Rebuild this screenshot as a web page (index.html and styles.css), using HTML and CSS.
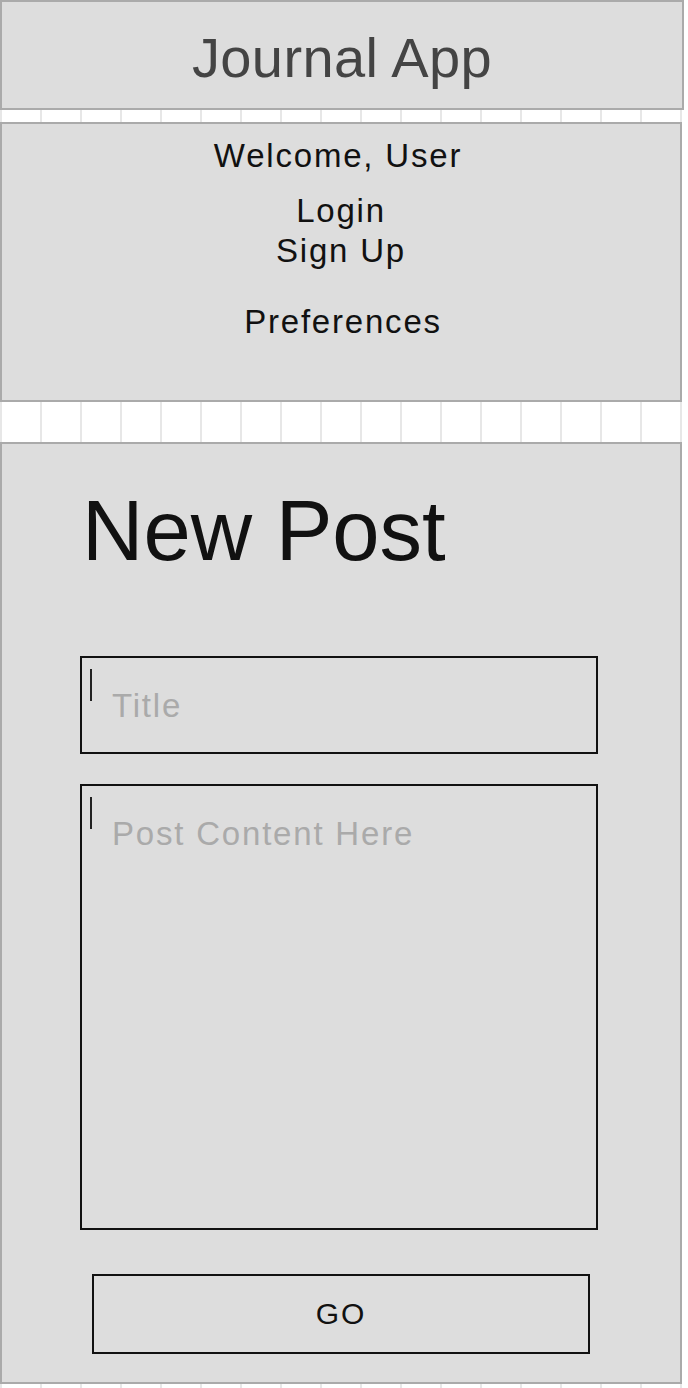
FILE: index.html
```html
<!DOCTYPE html>
<html lang="en">
<head>
<meta charset="utf-8">
<title>Journal App</title>
<link rel="stylesheet" href="styles.css">
</head>
<body>
  <header class="app-header">
    <h1 class="app-title">Journal App</h1>
  </header>

  <nav class="user-panel">
    <div class="nav-item welcome">Welcome, User</div>
    <div class="nav-item login">Login</div>
    <div class="nav-item signup">Sign Up</div>
    <div class="nav-item prefs">Preferences</div>
  </nav>

  <main class="post-panel">
    <h2 class="post-heading">New Post</h2>
    <div class="field field-title">
      <span class="caret"></span>
      <span class="placeholder">Title</span>
    </div>
    <div class="field field-content">
      <span class="caret"></span>
      <span class="placeholder">Post Content Here</span>
    </div>
    <div class="go-button">GO</div>
  </main>
</body>
</html>
```

FILE: styles.css
```css
html {
  background: repeating-linear-gradient(90deg, #e7e7e7 0 2px, #ffffff 2px 40px);
  min-height: 100%;
}

body {
  margin: 0;
  font-family: "Liberation Sans", Arial, sans-serif;
  color: #111;
}

.app-header {
  box-sizing: border-box;
  width: 684px;
  height: 110px;
  background: #dddddd;
  border: 2px solid #aaaaaa;
  padding-top: 24px;
}

.app-title {
  margin: 0;
  font-size: 56px;
  line-height: 63px;
  letter-spacing: 0.4px;
  font-weight: normal;
  color: #444444;
  text-align: center;
}

.user-panel {
  box-sizing: border-box;
  width: 682px;
  height: 280px;
  margin-top: 12px;
  background: #dddddd;
  border: 2px solid #aaaaaa;
  padding-top: 12px;
  display: flex;
  flex-direction: column;
  align-items: center;
}

.nav-item {
  font-size: 33px;
  line-height: 40px;
  letter-spacing: 1.8px;
  color: #111;
}

.welcome { margin-right: 6px; }
.login { margin-top: 15px; }
.prefs { margin-top: 31px; margin-left: 4px; }

.post-panel {
  box-sizing: border-box;
  width: 682px;
  height: 942px;
  margin-top: 40px;
  background: #dddddd;
  border: 2px solid #aaaaaa;
  padding: 40px 0 0 78px;
  display: flex;
  flex-direction: column;
}

.post-heading {
  margin: 0 0 0 2px;
  font-size: 85px;
  line-height: 94px;
  font-weight: normal;
  color: #111;
}

.field {
  box-sizing: border-box;
  width: 518px;
  border: 2px solid #111;
  display: flex;
  align-items: flex-start;
  padding-left: 8px;
}

.field-title {
  height: 98px;
  margin-top: 78px;
}

.field-content {
  height: 446px;
  margin-top: 30px;
}

.caret {
  width: 2px;
  height: 32px;
  margin-top: 11px;
  background: #222;
  flex: none;
}

.placeholder {
  margin-top: 28px;
  margin-left: 20px;
  font-size: 33px;
  line-height: 40px;
  letter-spacing: 1.8px;
  color: #aaaaaa;
}

.go-button {
  box-sizing: border-box;
  width: 498px;
  height: 80px;
  margin-top: 44px;
  margin-left: 12px;
  border: 2px solid #111;
  display: flex;
  align-items: center;
  justify-content: center;
  font-size: 30px;
  letter-spacing: 2px;
  color: #111;
}
```
